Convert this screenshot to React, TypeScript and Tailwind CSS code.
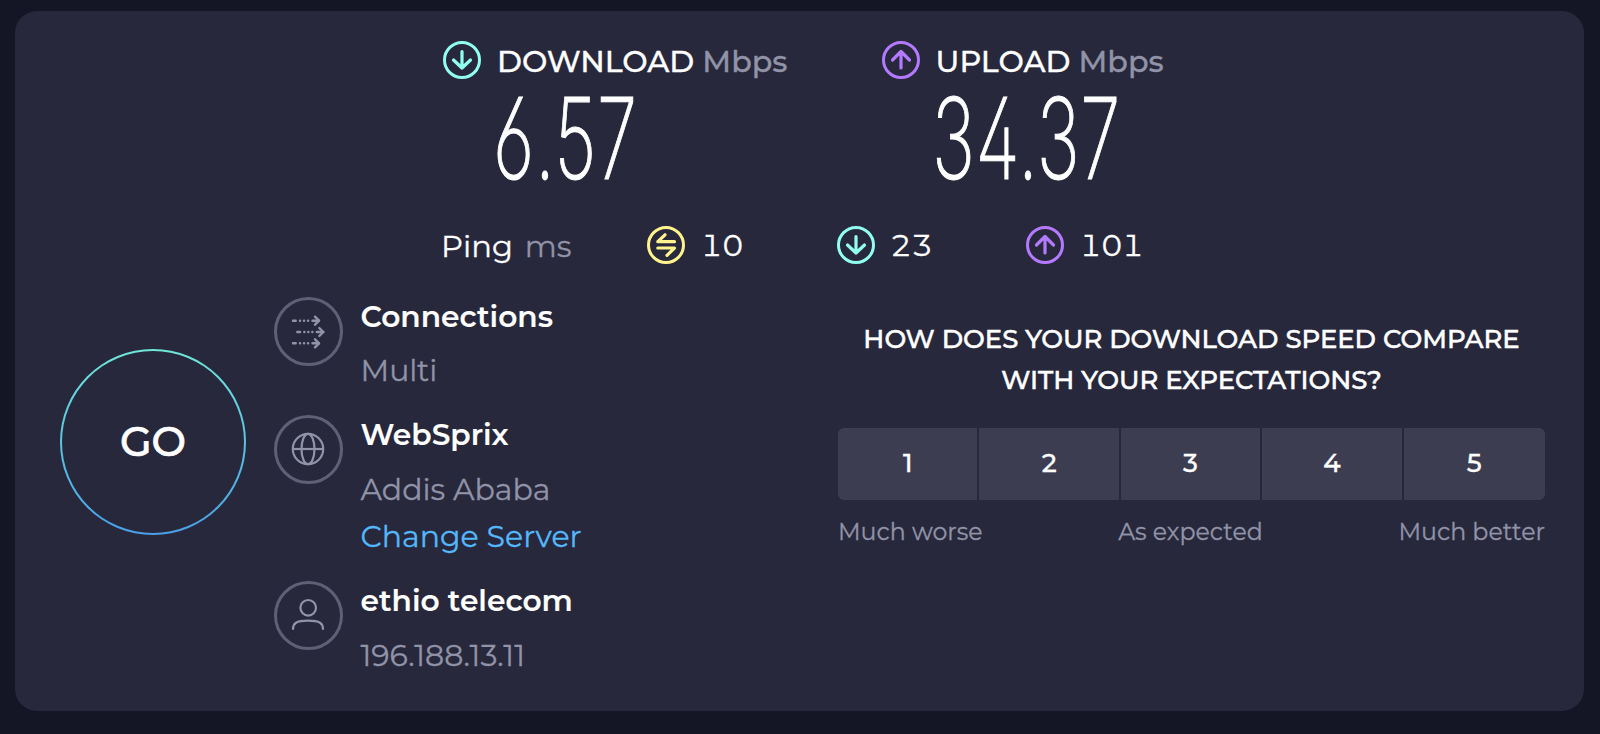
import React from "react";
import clsx from "clsx";

type IconProps = { className?: string };

function ArrowCircle({ up, className }: IconProps & { up?: boolean }) {
  return (
    <svg viewBox="0 0 38 38" fill="none" stroke="currentColor" className={clsx("size-[38px] shrink-0", className)}>
      <circle cx="19" cy="19" r="17.5" strokeWidth="3" />
      <path
        d={up ? "M19 27V10.5M10.5 19L19 10.5L27.5 19" : "M19 10.5V27M10.5 19L19 27L27.5 19"}
        strokeWidth="3.2"
        strokeLinecap="round"
        strokeLinejoin="round"
      />
    </svg>
  );
}

function PingIcon() {
  return (
    <svg viewBox="0 0 38 38" fill="none" stroke="currentColor" className="size-[38px] shrink-0 text-[#fff38e]">
      <circle cx="19" cy="19" r="17.5" strokeWidth="3" />
      <path
        d="M27.5 15.7H10.8L18 8.8M10.8 22H27.5L20 29.3"
        strokeWidth="3.2"
        strokeLinecap="round"
        strokeLinejoin="round"
      />
    </svg>
  );
}

function ConnectionsIcon() {
  return (
    <svg viewBox="0 0 34 34" fill="none" stroke="currentColor" strokeWidth="2.4" strokeLinecap="round" strokeLinejoin="round" className="size-[34px]">
      {[
        [2, 5.7],
        [6.3, 17],
        [2, 28.3],
      ].map(([x, y]) => (
        <g key={y}>
          <path d={`M${x} ${y}h2.7M${x + 7} ${y}h.1M${x + 11} ${y}h.1M${x + 15} ${y}h.1M${x + 19.5} ${y}h6.5`} />
          <path d={`M${x + 22} ${y - 4}l4 4l-4 4`} />
        </g>
      ))}
    </svg>
  );
}

function GlobeIcon() {
  return (
    <svg viewBox="0 0 34 34" fill="none" stroke="currentColor" strokeWidth="2.2" className="size-[34px]">
      <circle cx="17" cy="17" r="15.2" />
      <ellipse cx="17" cy="17" rx="6.5" ry="15.2" />
      <path d="M1.8 17H32.2" />
    </svg>
  );
}

function UserIcon() {
  return (
    <svg viewBox="0 0 34 34" fill="none" stroke="currentColor" strokeWidth="2.2" strokeLinecap="round" className="size-[34px]">
      <circle cx="17.2" cy="9.8" r="7.8" />
      <path d="M2 31C2 25.5 5 22.6 17 22.6S32 25.5 32 31" />
    </svg>
  );
}

function Speed({ up, label, value }: { up?: boolean; label: string; value: string }) {
  return (
    <div className="w-[438.5px]">
      <div className="flex h-[38px] items-center text-[30.2px] leading-[34px] font-medium">
        <ArrowCircle up={up} className={up ? "text-[#b379ff]" : "text-[#91fff0]"} />
        <span className="ml-4 pt-1">{label}</span>
        <span className="ml-2 pt-1 text-[#9193a8]">Mbps</span>
      </div>
      {/* Condensed light digits with open 4 and 6 */}
      <div className="mt-[17px] ml-[50px] h-[84px] origin-left scale-x-[.64] font-['Inter'] text-[113px] leading-[84px] font-extralight tracking-[1px] [-webkit-text-stroke:1.1px] [font-feature-settings:'cv02','cv03']">
        {value}
      </div>
    </div>
  );
}

type InfoProps = { icon: React.ReactNode; title: string; className?: string; children: React.ReactNode };

function Info({ icon, title, className, children }: InfoProps) {
  return (
    <div className={clsx("flex", className)}>
      <div className="flex size-[69px] shrink-0 items-center justify-center rounded-full border-[3px] border-[#5f6075] text-[#9193a8]">
        {icon}
      </div>
      <div className="ml-[18px] text-[30px] leading-[40px]">
        <div className="-mt-px text-[29.7px] font-semibold [-webkit-text-stroke:0.1px]">{title}</div>
        {children}
      </div>
    </div>
  );
}

export default function App() {
  return (
    <div className="h-[734px] overflow-hidden bg-[#141625] pt-[11px] pl-[15px] font-['Montserrat','Inter',sans-serif] text-white [-webkit-text-stroke:0.3px]">
      <main className="h-[700px] w-[1569px] rounded-[22px] bg-[#27283b]">
        <div className="flex pt-[30px] pl-[428px]">
          <Speed label="DOWNLOAD" value="6.57" />
          <Speed up label="UPLOAD" value="34.37" />
        </div>

        {/* Ping */}
        <div className="mt-[46px] flex h-[38px] items-center pl-[426px] text-[30.2px] leading-[36px] tabular-nums">
          <div className="w-[206px] pt-[2px]">
            <span className="text-[30.6px]">Ping</span>
            <span className="ml-3 text-[#9193a8]">ms</span>
          </div>
          <div className="flex w-[189.5px] items-center gap-4">
            <PingIcon />
            <span className="pt-[2px]">10</span>
          </div>
          <div className="flex w-[189.5px] items-center gap-4">
            <ArrowCircle className="text-[#91fff0]" />
            <span className="pt-[2px]">23</span>
          </div>
          <div className="flex items-center gap-4">
            <ArrowCircle up className="text-[#b379ff]" />
            <span className="pt-[2px]">101</span>
          </div>
        </div>

        <div className="flex">
          <button className="mt-[85px] ml-[45px] size-[186px] shrink-0 rounded-full bg-linear-to-b from-[#6fe7d8] to-[#4b9fe8] p-[2px]">
            <span className="flex size-full items-center justify-center rounded-full bg-[#27283b] text-[41px] font-medium [-webkit-text-stroke:0.7px]">
              GO
            </span>
          </button>

          <div className="ml-[27.5px] w-[564.5px] pt-[33px]">
            <Info icon={<ConnectionsIcon />} title="Connections" className="h-[117.5px]">
              <div className="mt-[15px] text-[#9193a8]">Multi</div>
            </Info>
            <Info icon={<GlobeIcon />} title="WebSprix" className="h-[166px]">
              <div className="mt-[16px] text-[#9193a8]">Addis Ababa</div>
              <div className="mt-[7px] text-[#55b8fb]">Change Server</div>
            </Info>
            <Info icon={<UserIcon />} title="ethio telecom">
              <div className="mt-[16px] text-[#9193a8]">196.188.13.11</div>
            </Info>
          </div>

          {/* Survey */}
          <div className="w-[707px] pt-[55px] text-center">
            <h2 className="text-[25.9px] leading-[41px] font-medium [-webkit-text-stroke:0.5px]">
              HOW DOES YOUR DOWNLOAD SPEED COMPARE
              <br />
              WITH YOUR EXPECTATIONS?
            </h2>
            <div className="mt-[27px] grid h-[72px] grid-cols-5 overflow-hidden rounded-md text-[26px] font-medium">
              {[1, 2, 3, 4, 5].map((n) => (
                <button key={n} className="border-r-2 border-[#27283b] bg-[#3c3d50] pb-[2px] last:border-r-0">
                  {n}
                </button>
              ))}
            </div>
            <div className="mt-[17px] flex justify-between text-[23.7px] leading-[30px] text-[#9193a8]">
              <span>Much worse</span>
              <span>As expected</span>
              <span>Much better</span>
            </div>
          </div>
        </div>
      </main>
    </div>
  );
}
